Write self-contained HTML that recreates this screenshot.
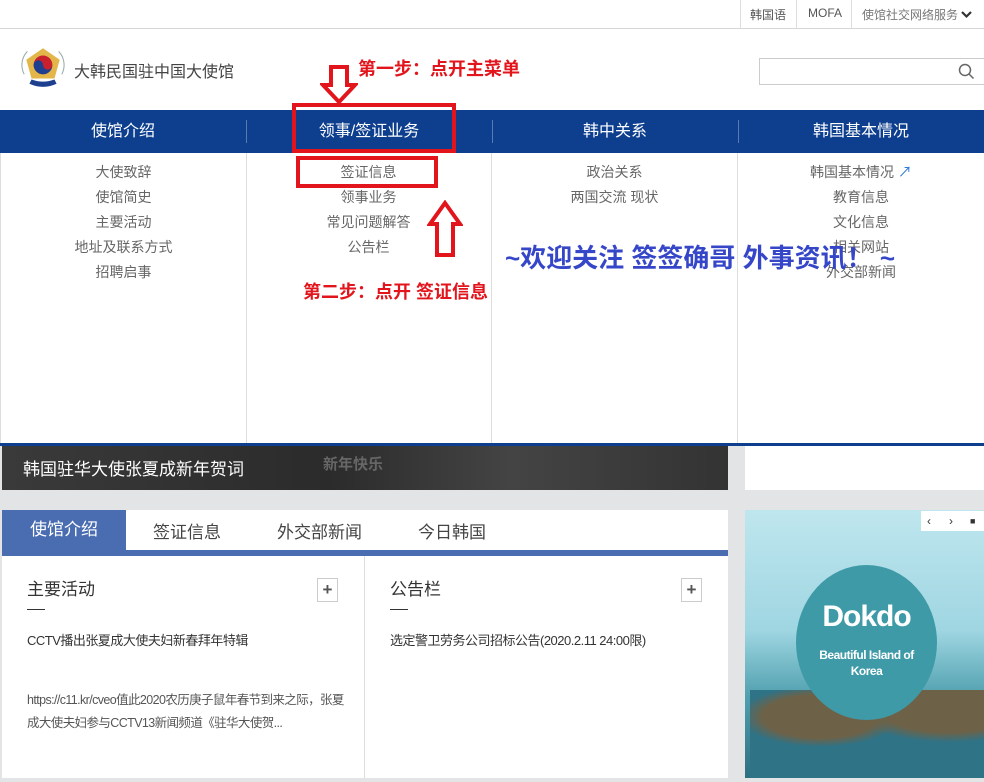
<!DOCTYPE html>
<html><head><meta charset="utf-8"><style>
*{margin:0;padding:0;box-sizing:border-box}
body{width:984px;height:782px;overflow:hidden;background:#fff;font-family:"Liberation Sans","Noto Sans CJK SC",sans-serif;position:relative;color:#444}
.a{position:absolute}
.top{left:0;top:0;width:984px;height:29px;border-bottom:1px solid #d6d6d6}
.top span{position:absolute;top:6px;font-size:12px;color:#555}
.sep{position:absolute;top:0;width:1px;height:28px;background:#ddd}
.nav{left:0;top:110px;width:984px;height:43px;background:#0e3f8f}
.nav div{position:absolute;top:0;width:246px;height:43px;line-height:43px;text-align:center;color:#fff;font-size:16px}
.nav i{position:absolute;top:10px;width:1px;height:23px;background:#5a7ab0}
.dd{left:0;top:153px;width:984px;height:290px;background:#fff;border-left:1px solid #ddd}
.col{position:absolute;top:0;width:246px;height:290px;border-right:1px solid #ddd;text-align:center;padding-top:7px}
.col p{font-size:14px;color:#666;line-height:25px}
.red{color:#e3151c;font-weight:bold;font-size:18px}
.box{border:4px solid #e3151c}
.gray{left:0;top:443px;width:984px;height:339px;background:#e3e4e6;border-top:3px solid #0e3f8f}
</style></head><body>
<div class="a top">
<div class="sep" style="left:740px"></div><span style="left:750px">韩国语</span>
<div class="sep" style="left:796px"></div><span style="left:808px">MOFA</span>
<div class="sep" style="left:851px"></div><span style="left:862px;color:#777">使馆社交网络服务</span>
<svg class="a" style="left:961px;top:10px" width="11" height="9" viewBox="0 0 11 9"><path d="M1 2l4.5 4.5L10 2" stroke="#333" stroke-width="2.2" fill="none"/></svg>
</div>
<svg class="a" style="left:19px;top:43px" width="48" height="48" viewBox="0 0 46 46">
<path d="M5 30A19 19 0 0 1 8 8M41 30A19 19 0 0 0 38 8" stroke="#9aa" fill="none"/>
<polygon points="23,5 39,16 34,34 12,34 7,16" fill="#e3b64a"/>
<circle cx="23" cy="21" r="9" fill="#c8202d"/><path d="M14 21a9 9 0 0 0 18 0a4.5 4.5 0 0 1-9 0a4.5 4.5 0 0 0-9 0" fill="#1d3f8f"/>
<path d="M10 39q13 6 26 0l-2-4q-11 4-22 0z" fill="#1d3f8f"/></svg>
<div class="a" style="left:74px;top:58px;font-size:16px;color:#444">大韩民国驻中国大使馆</div>
<div class="a" style="left:759px;top:58px;width:226px;height:27px;border:1px solid #ccc"></div>
<svg class="a" style="left:958px;top:63px" width="17" height="17" viewBox="0 0 17 17"><circle cx="7" cy="7" r="5.5" stroke="#666" stroke-width="1.5" fill="none"/><path d="M11 11l4.5 4.5" stroke="#666" stroke-width="1.5"/></svg>
<div class="a red" style="left:358px;top:55px">第一步：点开主菜单</div>
<svg class="a" style="left:320px;top:65px" width="38" height="40" viewBox="0 0 38 40"><path d="M11 2h16v18h8L19 37 3 20h8z" fill="#fff" stroke="#e3151c" stroke-width="4"/></svg>
<div class="a nav">
<div style="left:0">使馆介绍</div><i style="left:246px"></i>
<div style="left:246px">领事/签证业务</div><i style="left:492px"></i>
<div style="left:492px">韩中关系</div><i style="left:738px"></i>
<div style="left:738px">韩国基本情况</div>
</div>
<div class="a box" style="left:292px;top:103px;width:164px;height:50px"></div>
<div class="a dd">
<div class="col" style="left:0"><p>大使致辞</p><p>使馆简史</p><p>主要活动</p><p>地址及联系方式</p><p>招聘启事</p></div>
<div class="col" style="left:245px"><p>签证信息</p><p>领事业务</p><p>常见问题解答</p><p>公告栏</p></div>
<div class="col" style="left:491px"><p>政治关系</p><p>两国交流 现状</p></div>
<div class="col" style="left:737px;border-right:none"><p>韩国基本情况 <span style="color:#2a7ad6">↗</span></p><p>教育信息</p><p>文化信息</p><p>相关网站</p><p>外交部新闻</p></div>
</div>
<div class="a box" style="left:296px;top:156px;width:142px;height:32px"></div>
<svg class="a" style="left:427px;top:200px" width="36" height="58" viewBox="0 0 36 58"><path d="M18 3L33 24h-7v31H10V24H3z" fill="#fff" stroke="#e3151c" stroke-width="4"/></svg>
<div class="a red" style="left:303px;top:278px">第二步：点开 签证信息</div>
<div class="a" style="left:505px;top:238px;font-size:26px;font-weight:bold;color:#3546c8;white-space:nowrap">~欢迎关注 签签确哥 外事资讯！ ~</div>
<div class="a gray"></div>
<div class="a" style="left:2px;top:446px;width:726px;height:44px;background:linear-gradient(90deg,#3a3a3a,#2b2b2b 45%,#444 70%,#333)"></div>
<div class="a" style="left:23px;top:455px;font-size:17px;color:#fff">韩国驻华大使张夏成新年贺词</div>
<div class="a" style="left:323px;top:453px;font-size:15px;color:#666;font-weight:bold">新年快乐</div>
<div class="a" style="left:745px;top:446px;width:239px;height:44px;background:#fff"></div>
<div class="a" style="left:2px;top:510px;width:726px;height:268px;background:#fff"></div>
<div class="a" style="left:2px;top:510px;width:124px;height:40px;background:#4a6cb0;color:#fff;font-size:17px;line-height:40px;text-align:center">使馆介绍</div>
<div class="a" style="left:153px;top:518px;font-size:17px;color:#444">签证信息</div>
<div class="a" style="left:277px;top:518px;font-size:17px;color:#444">外交部新闻</div>
<div class="a" style="left:418px;top:518px;font-size:17px;color:#444">今日韩国</div>
<div class="a" style="left:2px;top:550px;width:726px;height:6px;background:#4a6cb0"></div>
<div class="a" style="left:364px;top:556px;width:1px;height:222px;background:#ddd"></div>
<div class="a" style="left:27px;top:575px;font-size:17px;color:#333">主要活动</div>
<div class="a" style="left:27px;top:609px;width:18px;height:1px;background:#333"></div>
<div class="a" style="left:317px;top:578px;width:21px;height:24px;border:1px solid #ccc;text-align:center;font-size:17px;line-height:21px;color:#555;font-weight:bold">+</div>
<div class="a" style="left:27px;top:630px;font-size:13px;color:#333;letter-spacing:-0.5px">CCTV播出张夏成大使夫妇新春拜年特辑</div>
<div class="a" style="left:27px;top:689px;width:320px;font-size:12.5px;color:#555;line-height:23px;letter-spacing:-0.6px">https://c11.kr/cveo值此2020农历庚子鼠年春节到来之际，张夏成大使夫妇参与CCTV13新闻频道《驻华大使贺...</div>
<div class="a" style="left:390px;top:575px;font-size:17px;color:#333">公告栏</div>
<div class="a" style="left:390px;top:609px;width:18px;height:1px;background:#333"></div>
<div class="a" style="left:681px;top:578px;width:21px;height:24px;border:1px solid #ccc;text-align:center;font-size:17px;line-height:21px;color:#555;font-weight:bold">+</div>
<div class="a" style="left:390px;top:630px;font-size:13px;color:#333;letter-spacing:-0.5px">选定警卫劳务公司招标公告(2020.2.11 24:00限)</div>
<div class="a" style="left:745px;top:510px;width:239px;height:268px;background:linear-gradient(180deg,#bfe6ee 0%,#9fd6e2 45%,#4f9fae 70%,#2e6f82 100%)"></div>
<div class="a" style="left:750px;top:690px;width:234px;height:88px;background:radial-gradient(ellipse at 30% 30%,#6d6248 0 25%,transparent 35%),radial-gradient(ellipse at 85% 20%,#6d6248 0 25%,transparent 35%),#2f7387"></div>
<div class="a" style="left:796px;top:565px;width:141px;height:155px;border-radius:50%;background:#3f9aa8"></div>
<div class="a" style="left:796px;top:600px;width:141px;text-align:center;color:#fff;font-weight:bold;font-size:30px;letter-spacing:-1px">Dokdo</div>
<div class="a" style="left:796px;top:647px;width:141px;text-align:center;color:#fff;font-weight:bold;font-size:12px;line-height:16px;letter-spacing:-0.5px">Beautiful Island of<br>Korea</div>
<div class="a" style="left:921px;top:511px;width:63px;height:20px;background:#fff;font-size:12px;color:#333;line-height:20px"><span style="position:absolute;left:6px">‹</span><span style="position:absolute;left:28px">›</span><span style="position:absolute;left:49px;font-size:9px">■</span></div>
</body></html>
